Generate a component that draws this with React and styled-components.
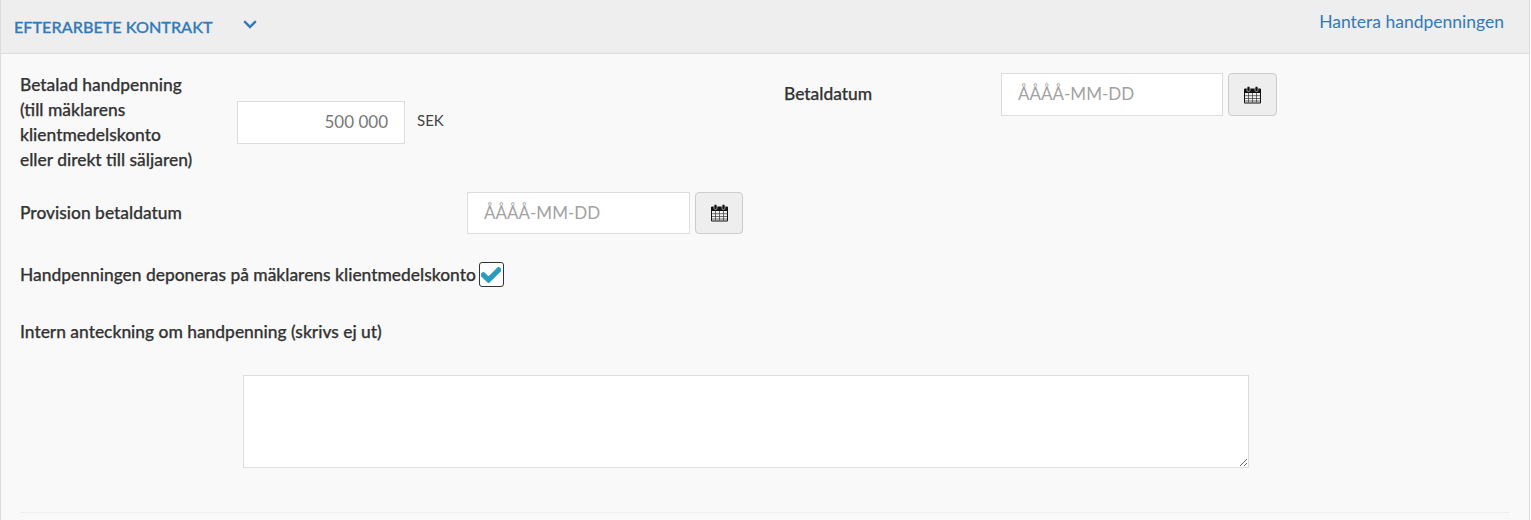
import React from 'react'
import styled, { createGlobalStyle } from 'styled-components'
import { FaCheck, FaChevronDown } from 'react-icons/fa'

const Global = createGlobalStyle`
  html, body { margin: 0; padding: 0; background: #fff; }
  body { font-family: Lato, "Open Sans", sans-serif; color: #333; overflow: hidden; }
  * { box-sizing: border-box; }
`

const Panel = styled.section`
  width: 1530px;
  height: 520px;
  background: #f9f9f9;
  border-left: 1px solid #ddd;
  border-right: 1px solid #ddd;
`

const Header = styled.header`
  height: 54px;
  background: #eee;
  border-bottom: 1px solid #ddd;
  display: flex;
  justify-content: space-between;
  padding: 0 25px 0 13px;
`

const TitleGroup = styled.div`
  display: flex;
  align-items: flex-start;
  padding-top: 17px;
  gap: 28px;
`

const Title = styled.h3`
  margin: 0;
  font-size: 16.2px;
  line-height: 20px;
  font-weight: 500;
  -webkit-text-stroke: 0.3px #337ab7;
  color: #337ab7;
`

const Chevron = styled(FaChevronDown)`
  width: 18px;
  height: 15px;
  color: #337ab7;
`

const ManageLink = styled.a`
  margin-top: 11px;
  font-size: 17.5px;
  line-height: 22px;
  color: #337ab7;
`

const Body = styled.div`
  padding: 19px 19px 0;
`

const TopRow = styled.div`
  display: flex;
  align-items: flex-start;
`

const Left = styled.div`
  width: 764px;
  display: flex;
  align-items: center;
`

const Label = styled.label`
  display: block;
  font-size: 17.4px;
  line-height: 25px;
  font-weight: 500;
  -webkit-text-stroke: 0.25px #333;
  color: #333;
  width: ${p => p.$width || 'auto'};
  flex: none;
`

const FirstLabel = styled(Label)`
  margin-top: -1px;
`

const RowLabel = styled(Label)`
  margin-bottom: 2px;
`

const Input = styled.input`
  width: ${p => p.$width}px;
  height: ${p => p.$height || 43}px;
  flex: none;
  border: 1px solid #ddd;
  background: #fff;
  padding: 0 16px 2px;
  font: 400 17px Lato, sans-serif;
  color: #777;
  text-align: ${p => p.$right ? 'right' : 'left'};
  outline: none;
  &::placeholder { color: #a2a2a2; opacity: 1; }
`

const Unit = styled.span`
  margin: 0 0 5px 12px;
  font-size: 15px;
  color: #444;
`

const DateRow = styled.div`
  display: flex;
  align-items: center;
`

const CalButton = styled.button`
  width: ${p => p.$width}px;
  height: ${p => p.$height}px;
  margin-left: 5px;
  padding: 0;
  background: #eee;
  border: 1px solid #ccc;
  border-radius: 4px;
  display: flex;
  align-items: center;
  justify-content: center;
`

const ProvisionRow = styled.div`
  display: flex;
  align-items: center;
  margin-top: 20px;
`

const CheckRow = styled.div`
  display: flex;
  align-items: center;
  gap: 3px;
  margin-top: 28px;
`

const CheckBox = styled.span`
  width: 25px;
  height: 25px;
  border: 1px solid #333;
  border-radius: 3px;
  background: #fff;
  display: flex;
  align-items: center;
  justify-content: center;
  color: #2a9bbf;

  svg {
    stroke: currentColor;
    stroke-width: 30px;
  }
`

const NoteLabel = styled(Label)`
  margin-top: 32px;
`

const NoteWrap = styled.div`
  padding: 31px 0 0 223px;
`

const Note = styled.textarea`
  display: block;
  width: 1006px;
  height: 93px;
  border: 1px solid #ddd;
  background: #fff;
  outline: none;
`

const Rule = styled.hr`
  margin: 44px 0 0;
  width: 1490px;
  border: 0;
  border-top: 1px solid #eee;
`

const Calendar = () => (
  <svg width="17" height="18" viewBox="0 0 17 18" aria-hidden="true">
    <path d="M0 3.5A1 1 0 0 1 1 2.500H16A1 1 0 0 1 17 3.500V16.500A1 1 0 0 1 16 17.500H1A1 1 0 0 1 0 16.500Z" fill="#111" />
    <rect x="3" y="0.500" width="3" height="5" rx="1.200" fill="#111" stroke="#eee" strokeWidth="0.600" />
    <rect x="11" y="0.500" width="3" height="5" rx="1.200" fill="#111" stroke="#eee" strokeWidth="0.600" />
    <path d="M1 7H16V16.500H1Z" fill="#f0f0f0" />
    <path d="M1 9.700H16M1 12.500H16M1 15H16M4.500 7V16.500M8.500 7V16.500M12.500 7V16.500" stroke="#333" strokeWidth="0.700" fill="none" />
  </svg>
)

export default function App() {
  return (
    <>
      <Global />
      <Panel>
        <Header>
          <TitleGroup>
            <Title>EFTERARBETE KONTRAKT</Title>
            <Chevron />
          </TitleGroup>
          <ManageLink>Hantera handpenningen</ManageLink>
        </Header>
        <Body>
          <TopRow>
            <Left>
              <FirstLabel $width="217px">
                Betalad handpenning<br />(till mäklarens<br />klientmedelskonto<br />eller direkt till säljaren)
              </FirstLabel>
              <Input $width={168} $right defaultValue="500 000" />
              <Unit>SEK</Unit>
            </Left>
            <DateRow>
              <RowLabel $width="217px">Betaldatum</RowLabel>
              <Input $width={222} placeholder="ÅÅÅÅ-MM-DD" />
              <CalButton $width={49} $height={43}><Calendar /></CalButton>
            </DateRow>
          </TopRow>
          <ProvisionRow>
            <RowLabel $width="447px">Provision betaldatum</RowLabel>
            <Input $width={223} $height={42} placeholder="ÅÅÅÅ-MM-DD" />
            <CalButton $width={48} $height={42}><Calendar /></CalButton>
          </ProvisionRow>
          <CheckRow>
            <Label>Handpenningen deponeras på mäklarens klientmedelskonto</Label>
            <CheckBox><FaCheck size={20} /></CheckBox>
          </CheckRow>
          <NoteLabel>Intern anteckning om handpenning (skrivs ej ut)</NoteLabel>
          <NoteWrap><Note /></NoteWrap>
          <Rule />
        </Body>
      </Panel>
    </>
  )
}
